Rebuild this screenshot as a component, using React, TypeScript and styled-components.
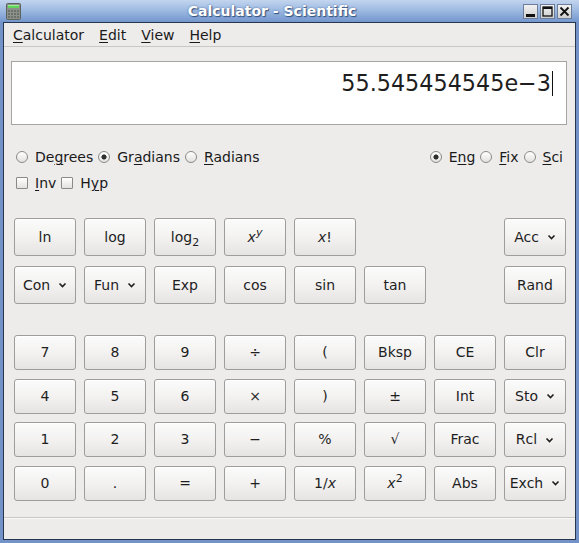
import React from "react";
import styled, { createGlobalStyle } from "styled-components";

const Global = createGlobalStyle`
  html, body { margin: 0; padding: 0; background: #edeceb; }
  body { font-family: "DejaVu Sans", "Liberation Sans", sans-serif; font-size: 14px; color: #1a1a1a; }
  * { box-sizing: border-box; }
`;

const Window = styled.div`
  width: 579px;
  height: 543px;
  display: flex;
  flex-direction: column;
  background: #7393c8;
  padding: 0 3px 3px 3px;
`;

const TitleBar = styled.div`
  height: 22px;
  margin: 0 -3px;
  display: flex;
  align-items: center;
  padding: 0 7px 0 6px;
  background: linear-gradient(#c3d5ee 0%, #9fbbe2 45%, #7396cd 100%);
`;

const AppIcon = styled.svg`
  width: 15px;
  height: 17px;
  flex: none;
`;

const Title = styled.div`
  flex: 1;
  text-align: center;
  font-weight: bold;
  font-size: 14px;
  color: #ffffff;
  text-shadow: 1px 1px 1px #34507e, 0 0 2px #4a6a9e;
`;

const TitleButtons = styled.div`
  display: flex;
  gap: 2px;
`;

const TitleBtn = styled.div`
  width: 15px;
  height: 15px;
  background: linear-gradient(#f2f2f2, #cfcfcf);
  border: 1px solid #6b7d9a;
  display: flex;
  align-items: center;
  justify-content: center;
`;

const Client = styled.div`
  flex: 1;
  display: flex;
  flex-direction: column;
  background: #edeceb;
  border: 1px solid #27364f;
`;

const MenuBar = styled.div`
  height: 24px;
  display: flex;
  align-items: center;
  gap: 1px;
  padding-left: 2px;
  border-bottom: 1px solid #c9c7c3;
`;

const MenuItem = styled.div`
  padding: 0 7px;
  font-size: 14px;
  color: #1a1a1a;
`;

const Mn = styled.span`
  text-decoration: underline;
  text-underline-offset: 2px;
  text-decoration-thickness: 1px;
`;

const Body = styled.div`
  flex: 1;
  display: flex;
  flex-direction: column;
  padding: 14px 8px 0 7px;
`;

const Display = styled.div`
  height: 64px;
  background: #ffffff;
  border: 1px solid #a6a4a0;
  display: flex;
  justify-content: flex-end;
  align-items: flex-start;
  padding: 8px 13px 0 0;
  font-size: 22.3px;
  color: #1e1e1e;
  line-height: 26px;
`;

const Cursor = styled.span`
  display: inline-block;
  width: 1px;
  height: 25px;
  background: #111;
  margin-left: 1px;
  margin-top: 1px;
`;

const OptionsRow = styled.div`
  margin-top: 23px;
  height: 18px;
  display: flex;
  justify-content: space-between;
  align-items: center;
  padding: 0 4px 0 5px;
`;

const Group = styled.div`
  display: flex;
  align-items: center;
  gap: 5px;
`;

const CheckRow = styled(Group)`
  margin-top: 8px;
  height: 18px;
  padding-left: 5px;
`;

const Option = styled.div`
  display: flex;
  align-items: center;
  gap: 7px;
  font-size: 14px;
  color: #1a1a1a;
`;

const Label = styled.span`
  white-space: nowrap;
`;

const RadioDot = styled.span<{ $on?: boolean }>`
  width: 12px;
  height: 12px;
  border-radius: 50%;
  border: 1px solid #8c8a86;
  background: ${(p) =>
    p.$on
      ? "radial-gradient(circle at 50% 50%, #303030 0 2.3px, transparent 2.8px), linear-gradient(#ffffff, #e2e1df)"
      : "linear-gradient(#ffffff, #e2e1df)"};
  flex: none;
`;

const CheckBox = styled.span`
  width: 12px;
  height: 12px;
  border: 1px solid #8c8a86;
  border-radius: 1px;
  background: linear-gradient(#ffffff, #e2e1df);
  flex: none;
`;

const Grid = styled.div<{ $rows: string; $gap: number; $top: number }>`
  margin-top: ${(p) => p.$top}px;
  padding-left: 3px;
  display: grid;
  grid-template-columns: repeat(8, 62px);
  grid-template-rows: ${(p) => p.$rows};
  column-gap: 8px;
  row-gap: ${(p) => p.$gap}px;
`;

const Btn = styled.button`
  font-family: "DejaVu Sans", "Liberation Sans", sans-serif;
  font-size: 14px;
  color: #1e1e1e;
  border: 1px solid #9f9d99;
  border-radius: 3px;
  background: linear-gradient(#fbfbfb 0%, #f3f2f1 50%, #e5e4e2 100%);
  box-shadow: inset 0 1px 0 #ffffff;
  padding: 0;
  display: flex;
  align-items: center;
  justify-content: center;
  gap: 8px;
  line-height: 17px;
`;

const Spacer = styled.div``;

const It = styled.i`
  font-style: italic;
`;

const Sup = styled.sup`
  font-size: 11px;
  line-height: 0;
  vertical-align: 6px;
`;

const Sub = styled.sub`
  font-size: 11px;
  line-height: 0;
  vertical-align: -4px;
`;

const StatusBar = styled.div`
  height: 22px;
  border-top: 1px solid #c9c7c3;
  box-shadow: inset 0 1px 0 #f7f7f6;
`;

const Chevron = () => (
  <svg width="9" height="6" viewBox="0 0 9 6">
    <polyline points="1.5,1.5 4.5,4.5 7.5,1.5" fill="none" stroke="#1e1e1e" strokeWidth="1.6" />
  </svg>
);

type Cell = React.ReactNode | null;

const D = ({ label }: { label: string }) => (
  <>
    <span>{label}</span>
    <Chevron />
  </>
);

const fnRows: Cell[] = [
  "ln",
  "log",
  <span>log<Sub>2</Sub></span>,
  <span><It>x</It><Sup><It>y</It></Sup></span>,
  <span><It>x</It>!</span>,
  null,
  null,
  <D label="Acc" />,
  <D label="Con" />,
  <D label="Fun" />,
  "Exp",
  "cos",
  "sin",
  "tan",
  null,
  "Rand",
];

const numRows: Cell[] = [
  "7", "8", "9", "÷", "(", "Bksp", "CE", "Clr",
  "4", "5", "6", "×", ")", "±", "Int", <D label="Sto" />,
  "1", "2", "3", "−", "%", "√", "Frac", <D label="Rcl" />,
  "0", ".", "=", "+", <span>1/<It>x</It></span>, <span><It>x</It><Sup>2</Sup></span>, "Abs", <D label="Exch" />,
];

const renderCells = (cells: Cell[]) =>
  cells.map((c, i) => (c === null ? <Spacer key={i} /> : <Btn key={i}>{c}</Btn>));

export default function App() {
  return (
    <>
      <Global />
      <Window>
        <TitleBar>
          <AppIcon viewBox="0 0 15 17">
            <rect x="0.5" y="0.5" width="14" height="16" rx="1" fill="#8c918c" stroke="#5d625d" />
            <rect x="2" y="2" width="11" height="3" fill="#5fd35a" />
            <rect x="2" y="2" width="11" height="1" fill="#9cf08f" />
            {[0, 1, 2].map((r) =>
              [0, 1, 2, 3].map((c) => (
                <rect key={`${r}-${c}`} x={2 + c * 3} y={7 + r * 3} width="2" height="2" fill="#6c716c" />
              ))
            )}
          </AppIcon>
          <Title>Calculator - Scientific</Title>
          <TitleButtons>
            <TitleBtn>
              <svg width="11" height="11" viewBox="0 0 11 11">
                <rect x="1" y="8" width="9" height="3" fill="#111" />
              </svg>
            </TitleBtn>
            <TitleBtn>
              <svg width="11" height="11" viewBox="0 0 11 11">
                <rect x="1" y="1" width="9" height="9" fill="none" stroke="#111" strokeWidth="1.3" />
                <rect x="1" y="1" width="9" height="2" fill="#111" />
              </svg>
            </TitleBtn>
            <TitleBtn>
              <svg width="11" height="11" viewBox="0 0 11 11">
                <path d="M1.5 1.5 L9.5 9.5 M9.5 1.5 L1.5 9.5" stroke="#111" strokeWidth="1.8" />
              </svg>
            </TitleBtn>
          </TitleButtons>
        </TitleBar>
        <Client>
          <MenuBar>
            <MenuItem><Mn>C</Mn>alculator</MenuItem>
            <MenuItem><Mn>E</Mn>dit</MenuItem>
            <MenuItem><Mn>V</Mn>iew</MenuItem>
            <MenuItem><Mn>H</Mn>elp</MenuItem>
          </MenuBar>
          <Body>
            <Display>
              <span>55.545454545e−3</span>
              <Cursor />
            </Display>
            <OptionsRow>
              <Group>
                <Option><RadioDot /><Label>De<Mn>g</Mn>rees</Label></Option>
                <Option><RadioDot $on /><Label>Gr<Mn>a</Mn>dians</Label></Option>
                <Option><RadioDot /><Label><Mn>R</Mn>adians</Label></Option>
              </Group>
              <Group>
                <Option><RadioDot $on /><Label>E<Mn>n</Mn>g</Label></Option>
                <Option><RadioDot /><Label><Mn>F</Mn>ix</Label></Option>
                <Option><RadioDot /><Label><Mn>S</Mn>ci</Label></Option>
              </Group>
            </OptionsRow>
            <CheckRow>
              <Option><CheckBox /><Label><Mn>I</Mn>nv</Label></Option>
              <Option><CheckBox /><Label>H<Mn>y</Mn>p</Label></Option>
            </CheckRow>
            <Grid $rows="38px 38px" $gap={10} $top={26}>
              {renderCells(fnRows)}
            </Grid>
            <Grid $rows="35px 35px 35px 35px" $gap={8.67} $top={31}>
              {renderCells(numRows)}
            </Grid>
          </Body>
          <StatusBar />
        </Client>
      </Window>
    </>
  );
}
